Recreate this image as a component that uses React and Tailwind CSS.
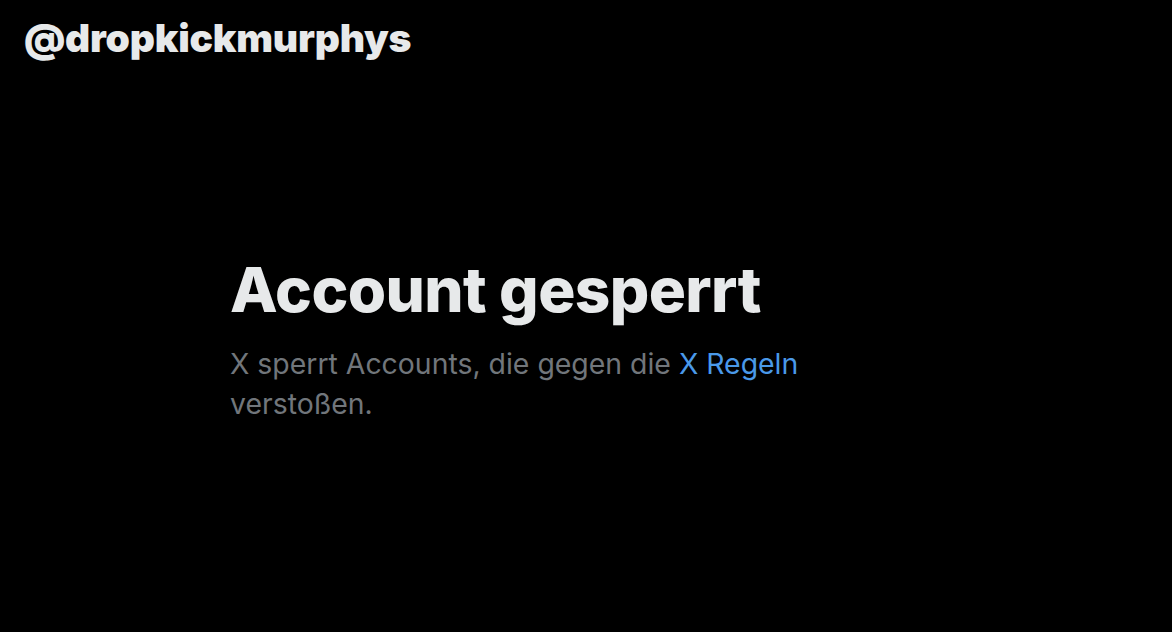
import React from 'react';

const App = () => {
  return (
    <div className="w-[1172px] h-[632px] bg-black overflow-hidden font-['Inter','Noto_Sans',sans-serif]">
      {/* Handle */}
      <div className="pt-[14px] pl-[24px]">
        <h1 className="text-[39px] leading-[48px] font-black tracking-[-0.2px] text-[#e7e9ea]">
          @dropkickmurphys
        </h1>
      </div>

      {/* Empty state */}
      <div className="pl-[230px] pt-[192px]">
        <div className="max-w-[672px]">
          <h2 className="text-[62px] leading-[72px] font-extrabold tracking-[-0.6px] text-[#e7e9ea]">
            Account gesperrt
          </h2>
          <p className="mt-[18px] text-[28.4px] leading-[40px] text-[#71767b]">
            X sperrt Accounts, die gegen die{' '}
            <a href="#" className="text-[#4a99e9] hover:underline">X Regeln</a>{' '}
            verstoßen.
          </p>
        </div>
      </div>
    </div>
  );
};

export default App;
